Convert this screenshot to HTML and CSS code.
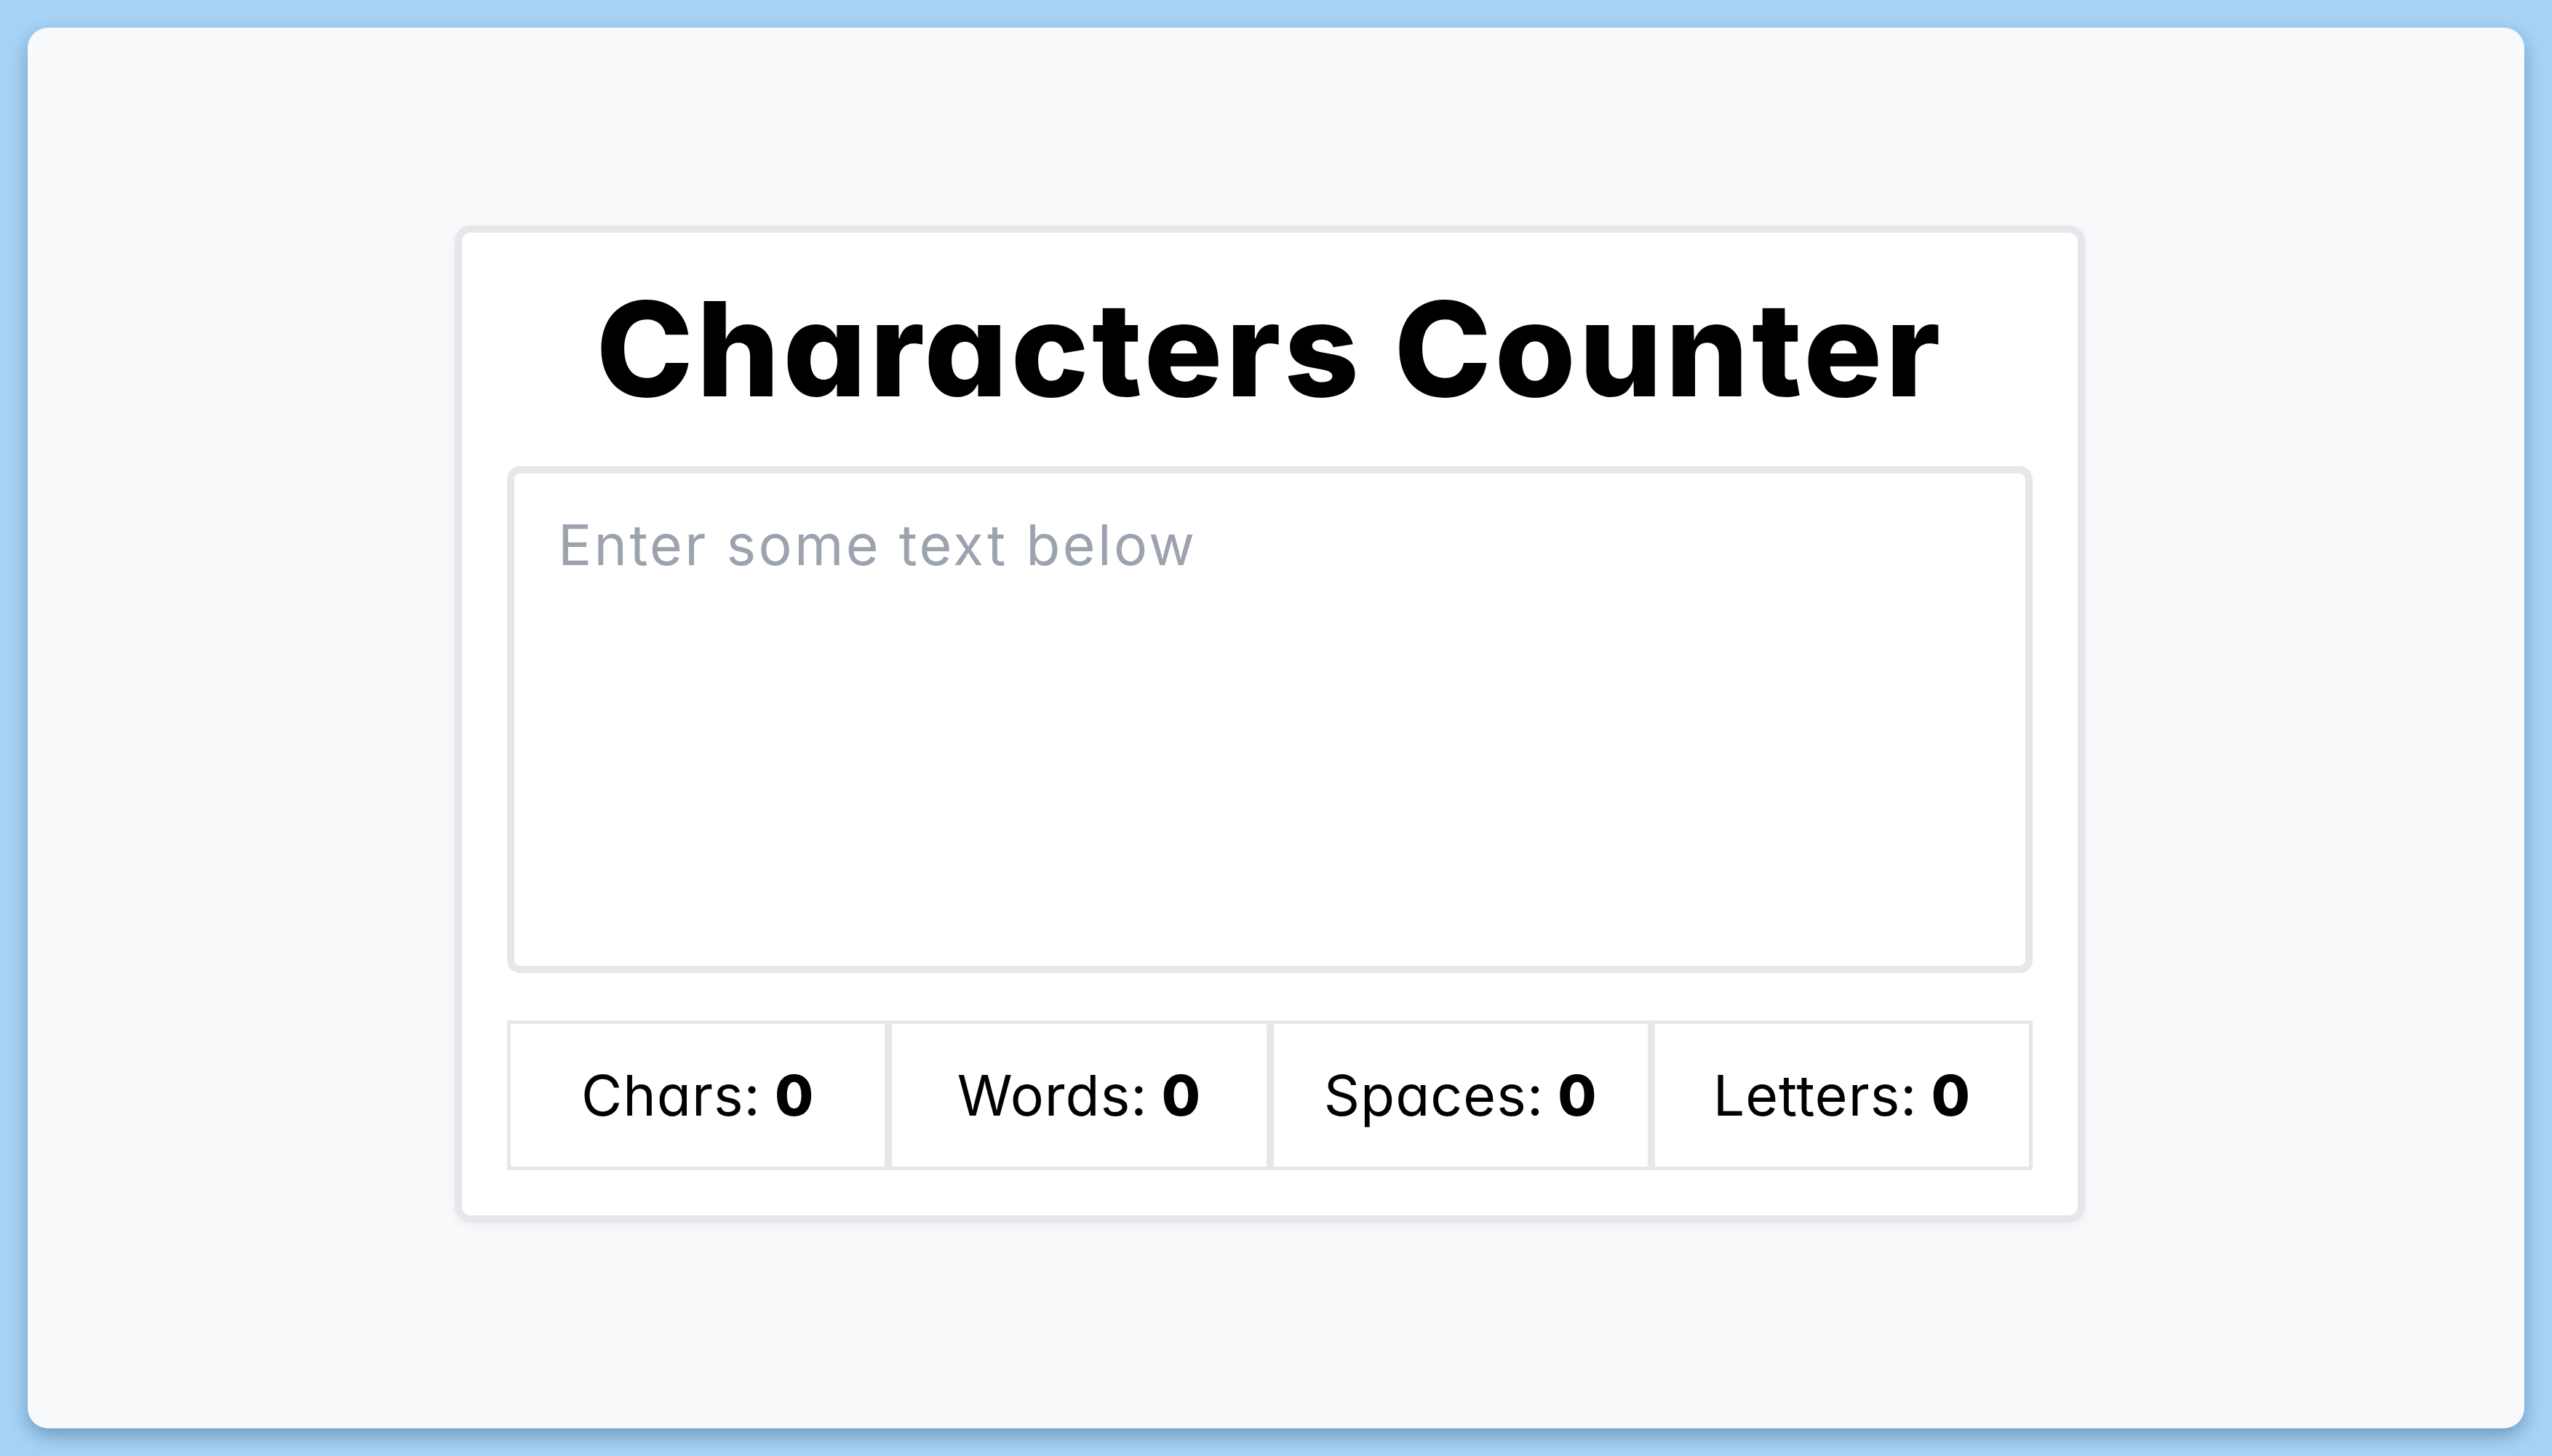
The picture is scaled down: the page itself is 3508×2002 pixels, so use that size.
FILE: index.html
```html
<!DOCTYPE html>
<html lang="en">
<head>
<meta charset="utf-8">
<title>Characters Counter</title>
<link rel="stylesheet" href="styles.css">
</head>
<body>
  <div class="window">
    <main class="card">
      <h1 class="title">Characters Counter</h1>
      <textarea class="input" placeholder="Enter some text below"></textarea>
      <div class="stats">
        <div class="stat">Chars: <b>0</b></div>
        <div class="stat">Words: <b>0</b></div>
        <div class="stat">Spaces: <b>0</b></div>
        <div class="stat">Letters: <b>0</b></div>
      </div>
    </main>
  </div>
</body>
</html>
```

FILE: styles.css
```css
html, body {
  margin: 0;
  padding: 0;
  height: 100%;
}

body {
  background: #a7d4f6;
  font-family: "Inter", "Noto Sans", "Liberation Sans", sans-serif;
  font-feature-settings: "cv11" 1;
  box-sizing: border-box;
  padding: 38px;
}

.window {
  box-sizing: border-box;
  height: 100%;
  background: #f8f9fb;
  border-radius: 28px;
  box-shadow: 0 10px 26px rgba(40, 80, 120, 0.45);
  display: flex;
  align-items: center;
  justify-content: center;
  padding: 0 17px 11px 0;
}

.card {
  box-sizing: border-box;
  width: 2241px;
  background: #ffffff;
  border: 10px solid #e5e7eb;
  border-radius: 22px;
  box-shadow: 0 4px 12px rgba(0, 0, 0, 0.05);
  padding: 62px;
  display: flex;
  flex-direction: column;
}

.title {
  margin: 8px 0 71px;
  font-size: 180px;
  line-height: 1;
  font-weight: 800;
  color: #000;
  text-align: center;
  letter-spacing: 4.4px;
}

.input {
  box-sizing: border-box;
  display: block;
  width: 100%;
  height: 697px;
  margin: 0;
  border: 10px solid #e5e7eb;
  border-radius: 18px;
  padding: 41px 60px;
  font-family: inherit;
  font-feature-settings: "cv11" 1;
  font-size: 77px;
  letter-spacing: 3.3px;
  line-height: 1.5;
  color: #111;
  resize: none;
  outline: none;
  background: #fff;
}

.input::placeholder {
  color: #9ca3af;
}

.stats {
  display: grid;
  grid-template-columns: repeat(4, 1fr);
  margin-top: 65px;
}

.stat {
  box-sizing: border-box;
  height: 206px;
  border: 5px solid #e5e7eb;
  display: flex;
  align-items: center;
  justify-content: center;
  font-size: 77px;
  font-weight: 400;
  letter-spacing: 1px;
  color: #000;
}

.stat b {
  font-weight: 800;
  margin-left: 0.25em;
}
```
